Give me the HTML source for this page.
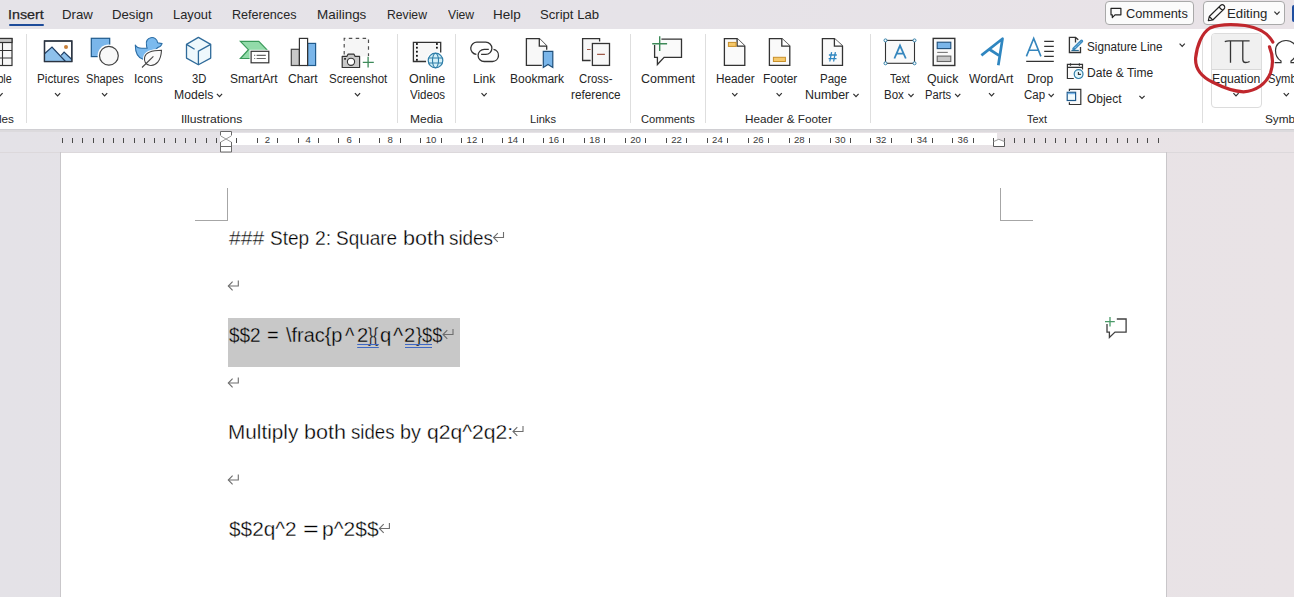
<!DOCTYPE html>
<html><head><meta charset="utf-8"><style>
html,body{margin:0;padding:0;}
body{width:1294px;height:597px;overflow:hidden;position:relative;background:#e6e3e7;font-family:"Liberation Sans",sans-serif;}
.t{position:absolute;white-space:pre;line-height:1;transform-origin:0 0;}
.a{position:absolute;}
svg{position:absolute;overflow:visible;}
</style></head><body>
<div class="a" style="left:0px;top:0px;width:1294px;height:29px;background:linear-gradient(to right,#e5e3e8,#e6e3e8 50%,#e9e3e7);"></div>
<div class="a" style="left:0px;top:29px;width:1294px;height:100px;background:#ffffff;"></div>
<div class="a" style="left:9px;top:24px;width:35px;height:2px;background:#1e4c9a;border-radius:1px;"></div>
<div class="a" style="left:0px;top:129px;width:1294px;height:24px;background:linear-gradient(to right,#e4e2e7,#e6e2e6 50%,#e9e3e6);"></div>
<div class="a" style="left:0px;top:129px;width:1294px;height:1px;background:#d0cfd3;"></div>
<div class="a" style="left:0px;top:130px;width:1294px;height:2px;background:#dcdadd;"></div>
<div class="a" style="left:220px;top:133px;width:777px;height:12px;background:#ffffff;"></div>
<div class="a" style="left:0px;top:152px;width:1294px;height:445px;background:linear-gradient(to right,#e4e2e7,#e6e2e6 50%,#e9e3e6);"></div>
<div class="a" style="left:0px;top:152px;width:1294px;height:1px;background:#dcd8db;"></div>
<div class="a" style="left:60px;top:152px;width:1px;height:445px;background:#c9c7ca;"></div>
<div class="a" style="left:61px;top:153px;width:1105px;height:444px;background:#ffffff;"></div>
<div class="a" style="left:1166px;top:152px;width:1px;height:445px;background:#c9c7ca;"></div>
<div class="a" style="left:26px;top:34px;width:1px;height:89px;background:#dedede;"></div>
<div class="a" style="left:397px;top:34px;width:1px;height:89px;background:#dedede;"></div>
<div class="a" style="left:455px;top:34px;width:1px;height:89px;background:#dedede;"></div>
<div class="a" style="left:630px;top:34px;width:1px;height:89px;background:#dedede;"></div>
<div class="a" style="left:705px;top:34px;width:1px;height:89px;background:#dedede;"></div>
<div class="a" style="left:870px;top:34px;width:1px;height:89px;background:#dedede;"></div>
<div class="a" style="left:1202px;top:34px;width:1px;height:89px;background:#dedede;"></div>
<div class="a" style="left:1105px;top:1px;width:89px;height:24px;background:#fbfbfb;border:1px solid #a9a9a9;border-radius:4px;box-sizing:border-box;"></div>
<div class="a" style="left:1203px;top:1px;width:82px;height:24px;background:#fbfbfb;border:1px solid #a9a9a9;border-radius:4px;box-sizing:border-box;"></div>
<div class="a" style="left:1292px;top:4.5px;width:2px;height:17.5px;background:#1f4fa0;border-radius:2px 0 0 2px;"></div>
<div class="a" style="left:1211px;top:33px;width:51px;height:75px;background:#ffffff;border:1px solid #dcdcdc;border-radius:4px;box-sizing:border-box;"></div>
<div class="a" style="left:1212px;top:34px;width:49px;height:35px;background:#f0f0f0;border-radius:3px 3px 0 0;"></div>
<div class="a" style="left:1212px;top:69px;width:49px;height:1px;background:#d8d8d8;"></div>
<div class="a" style="left:227px;top:188px;width:1px;height:33px;background:#a6a6a6;"></div>
<div class="a" style="left:195px;top:220px;width:33px;height:1px;background:#a6a6a6;"></div>
<div class="a" style="left:1000px;top:188px;width:1px;height:33px;background:#a6a6a6;"></div>
<div class="a" style="left:1000px;top:220px;width:33px;height:1px;background:#a6a6a6;"></div>
<div class="a" style="left:228px;top:318px;width:232px;height:49px;background:#c8c8c8;"></div>
<div class="t" style="left:8.11px;top:8.15px;font-size:13px;color:#262626;transform:scaleX(1.1020);-webkit-text-stroke:0.25px #262626;">Insert</div>
<div class="t" style="left:62.24px;top:8.15px;font-size:13px;color:#262626;transform:scaleX(1.0159);">Draw</div>
<div class="t" style="left:112.45px;top:8.15px;font-size:13px;color:#262626;transform:scaleX(1.0121);">Design</div>
<div class="t" style="left:173.17px;top:8.15px;font-size:13px;color:#262626;transform:scaleX(0.9880);">Layout</div>
<div class="t" style="left:232.39px;top:8.15px;font-size:13px;color:#262626;transform:scaleX(0.9695);">References</div>
<div class="t" style="left:316.52px;top:8.15px;font-size:13px;color:#262626;transform:scaleX(1.0349);">Mailings</div>
<div class="t" style="left:386.63px;top:8.15px;font-size:13px;color:#262626;transform:scaleX(0.9370);">Review</div>
<div class="t" style="left:447.60px;top:8.15px;font-size:13px;color:#262626;transform:scaleX(0.9364);">View</div>
<div class="t" style="left:493.12px;top:8.15px;font-size:13px;color:#262626;transform:scaleX(1.0373);">Help</div>
<div class="t" style="left:540.11px;top:8.15px;font-size:13px;color:#262626;transform:scaleX(1.0085);">Script Lab</div>
<div class="t" style="left:1126.16px;top:6.75px;font-size:13px;color:#262626;transform:scaleX(0.9831);">Comments</div>
<div class="t" style="left:1227.44px;top:6.75px;font-size:13px;color:#262626;transform:scaleX(1.0155);">Editing</div>
<div class="t" style="left:-14.22px;top:73.10px;font-size:12px;color:#262626;transform:scaleX(0.8979);">Table</div>
<div class="t" style="left:36.66px;top:73.10px;font-size:12px;color:#262626;transform:scaleX(0.9769);">Pictures</div>
<div class="t" style="left:85.70px;top:73.10px;font-size:12px;color:#262626;transform:scaleX(0.9260);">Shapes</div>
<div class="t" style="left:134.22px;top:73.10px;font-size:12px;color:#262626;transform:scaleX(1.0044);">Icons</div>
<div class="t" style="left:191.81px;top:73.10px;font-size:12px;color:#262626;transform:scaleX(0.9335);">3D</div>
<div class="t" style="left:173.82px;top:89.10px;font-size:12px;color:#262626;transform:scaleX(1.0160);">Models</div>
<div class="t" style="left:230.46px;top:73.10px;font-size:12px;color:#262626;transform:scaleX(1.0050);">SmartArt</div>
<div class="t" style="left:288.39px;top:73.10px;font-size:12px;color:#262626;transform:scaleX(1.0101);">Chart</div>
<div class="t" style="left:328.78px;top:73.10px;font-size:12px;color:#262626;transform:scaleX(0.9596);">Screenshot</div>
<div class="t" style="left:408.94px;top:73.10px;font-size:12px;color:#262626;transform:scaleX(1.0400);">Online</div>
<div class="t" style="left:409.50px;top:89.10px;font-size:12px;color:#262626;transform:scaleX(0.9624);">Videos</div>
<div class="t" style="left:473.43px;top:73.10px;font-size:12px;color:#262626;transform:scaleX(1.0088);">Link</div>
<div class="t" style="left:509.84px;top:73.10px;font-size:12px;color:#262626;transform:scaleX(1.0016);">Bookmark</div>
<div class="t" style="left:579.03px;top:73.10px;font-size:12px;color:#262626;transform:scaleX(0.9469);">Cross-</div>
<div class="t" style="left:570.84px;top:89.10px;font-size:12px;color:#262626;transform:scaleX(0.9793);">reference</div>
<div class="t" style="left:640.98px;top:73.10px;font-size:12px;color:#262626;transform:scaleX(1.0393);">Comment</div>
<div class="t" style="left:715.56px;top:73.10px;font-size:12px;color:#262626;transform:scaleX(0.9806);">Header</div>
<div class="t" style="left:762.85px;top:73.10px;font-size:12px;color:#262626;transform:scaleX(0.9891);">Footer</div>
<div class="t" style="left:819.68px;top:73.10px;font-size:12px;color:#262626;transform:scaleX(0.9559);">Page</div>
<div class="t" style="left:804.60px;top:89.10px;font-size:12px;color:#262626;transform:scaleX(1.0370);">Number</div>
<div class="t" style="left:889.78px;top:73.10px;font-size:12px;color:#262626;transform:scaleX(0.9018);">Text</div>
<div class="t" style="left:883.58px;top:89.10px;font-size:12px;color:#262626;transform:scaleX(0.9593);">Box</div>
<div class="t" style="left:927.45px;top:73.10px;font-size:12px;color:#262626;transform:scaleX(1.0201);">Quick</div>
<div class="t" style="left:924.61px;top:89.10px;font-size:12px;color:#262626;transform:scaleX(0.9314);">Parts</div>
<div class="t" style="left:969.40px;top:73.10px;font-size:12px;color:#262626;transform:scaleX(1.0148);">WordArt</div>
<div class="t" style="left:1026.73px;top:73.10px;font-size:12px;color:#262626;transform:scaleX(1.0059);">Drop</div>
<div class="t" style="left:1024.23px;top:89.10px;font-size:12px;color:#262626;transform:scaleX(0.9560);">Cap</div>
<div class="t" style="left:1086.97px;top:40.80px;font-size:12px;color:#262626;transform:scaleX(0.9757);">Signature Line</div>
<div class="t" style="left:1087.04px;top:66.60px;font-size:12px;color:#262626;transform:scaleX(1.0033);">Date &amp; Time</div>
<div class="t" style="left:1087.46px;top:92.60px;font-size:12px;color:#262626;transform:scaleX(0.9968);">Object</div>
<div class="t" style="left:1212.02px;top:73.10px;font-size:12px;color:#262626;transform:scaleX(1.0202);">Equation</div>
<div class="t" style="left:1267.90px;top:73.10px;font-size:12px;color:#262626;transform:scaleX(0.9347);">Symbol</div>
<div class="t" style="left:-20.23px;top:113.65px;font-size:11px;color:#262626;transform:scaleX(1.0676);">Tables</div>
<div class="t" style="left:181.31px;top:113.65px;font-size:11px;color:#262626;transform:scaleX(1.1040);">Illustrations</div>
<div class="t" style="left:410.04px;top:113.65px;font-size:11px;color:#262626;transform:scaleX(1.0919);">Media</div>
<div class="t" style="left:529.91px;top:113.65px;font-size:11px;color:#262626;transform:scaleX(1.0117);">Links</div>
<div class="t" style="left:641.04px;top:113.65px;font-size:11px;color:#262626;transform:scaleX(1.0145);">Comments</div>
<div class="t" style="left:744.56px;top:113.65px;font-size:11px;color:#262626;transform:scaleX(1.0673);">Header &amp; Footer</div>
<div class="t" style="left:1026.78px;top:113.65px;font-size:11px;color:#262626;transform:scaleX(0.9888);">Text</div>
<div class="t" style="left:1265.17px;top:113.65px;font-size:11px;color:#262626;transform:scaleX(1.0727);">Symbols</div>
<div class="t" style="left:228.80px;top:229.43px;font-size:19.5px;color:#000000;transform:scaleX(1.0827);-webkit-text-stroke:0.3px #ffffff;">###</div>
<div class="t" style="left:270.14px;top:229.43px;font-size:19.5px;color:#000000;transform:scaleX(0.9757);-webkit-text-stroke:0.3px #ffffff;">Step</div>
<div class="t" style="left:314.93px;top:229.43px;font-size:19.5px;color:#000000;transform:scaleX(0.9945);-webkit-text-stroke:0.3px #ffffff;">2:</div>
<div class="t" style="left:335.55px;top:229.43px;font-size:19.5px;color:#000000;transform:scaleX(0.9722);-webkit-text-stroke:0.3px #ffffff;">Square</div>
<div class="t" style="left:402.50px;top:229.43px;font-size:19.5px;color:#000000;transform:scaleX(1.1070);-webkit-text-stroke:0.3px #ffffff;">both</div>
<div class="t" style="left:449.33px;top:229.43px;font-size:19.5px;color:#000000;transform:scaleX(0.9673);-webkit-text-stroke:0.3px #ffffff;">sides</div>
<div class="t" style="left:228.51px;top:326.43px;font-size:19.5px;color:#000000;transform:scaleX(0.9733);-webkit-text-stroke:0.3px #c8c8c8;">$$2</div>
<div class="t" style="left:267.20px;top:326.43px;font-size:19.5px;color:#000000;transform:scaleX(1.0256);-webkit-text-stroke:0.3px #c8c8c8;">=</div>
<div class="t" style="left:285.80px;top:326.43px;font-size:19.5px;color:#000000;transform:scaleX(1.0206);-webkit-text-stroke:0.3px #c8c8c8;">\frac{p</div>
<div class="t" style="left:356.59px;top:326.43px;font-size:19.5px;color:#000000;transform:scaleX(1.0368);-webkit-text-stroke:0.3px #c8c8c8;">2</div>
<div class="t" style="left:367.57px;top:326.43px;font-size:19.5px;color:#000000;transform:scaleX(0.7865);-webkit-text-stroke:0.3px #c8c8c8;">}{</div>
<div class="t" style="left:379.99px;top:326.43px;font-size:19.5px;color:#000000;transform:scaleX(1.0369);-webkit-text-stroke:0.3px #c8c8c8;">q</div>
<div class="t" style="left:404.39px;top:326.43px;font-size:19.5px;color:#000000;transform:scaleX(1.0368);-webkit-text-stroke:0.3px #c8c8c8;">2</div>
<div class="t" style="left:415.73px;top:326.43px;font-size:19.5px;color:#000000;transform:scaleX(0.9389);-webkit-text-stroke:0.3px #c8c8c8;">}$$</div>
<div class="t" style="left:345.10px;top:324.29px;font-size:19.5px;color:#000000;transform:scale(1.0256,1.2536);-webkit-text-stroke:0.3px #c8c8c8;">^</div>
<div class="t" style="left:392.90px;top:324.29px;font-size:19.5px;color:#000000;transform:scale(1.1139,1.2536);-webkit-text-stroke:0.3px #c8c8c8;">^</div>
<div class="t" style="left:227.74px;top:423.43px;font-size:19.5px;color:#000000;transform:scaleX(1.0629);-webkit-text-stroke:0.3px #ffffff;">Multiply</div>
<div class="t" style="left:303.70px;top:423.43px;font-size:19.5px;color:#000000;transform:scaleX(1.1070);-webkit-text-stroke:0.3px #ffffff;">both</div>
<div class="t" style="left:350.63px;top:423.43px;font-size:19.5px;color:#000000;transform:scaleX(0.9560);-webkit-text-stroke:0.3px #ffffff;">sides</div>
<div class="t" style="left:399.91px;top:423.43px;font-size:19.5px;color:#000000;transform:scaleX(1.0142);-webkit-text-stroke:0.3px #ffffff;">by</div>
<div class="t" style="left:426.86px;top:423.43px;font-size:19.5px;color:#000000;transform:scaleX(1.0824);-webkit-text-stroke:0.3px #ffffff;">q2q^2q2:</div>
<div class="t" style="left:228.69px;top:520.42px;font-size:19.5px;color:#000000;transform:scaleX(1.0662);-webkit-text-stroke:0.3px #ffffff;">$$2q^2</div>
<div class="t" style="left:302.59px;top:520.42px;font-size:19.5px;color:#000000;transform:scaleX(1.3815);-webkit-text-stroke:0.3px #ffffff;">=</div>
<div class="t" style="left:321.64px;top:520.42px;font-size:19.5px;color:#000000;transform:scaleX(1.0774);-webkit-text-stroke:0.3px #ffffff;">p^2$$</div>
<svg width="1294" height="597" style="left:0;top:0;position:absolute" viewBox="0 0 1294 597"><rect x="-14" y="38.5" width="26" height="27" fill="#f8f8f8" stroke="#333333" stroke-width="1.2"/><rect x="-14" y="38.5" width="26" height="4" fill="#c8c8c8" stroke="#333333" stroke-width="1.2"/><path d="M2.5,42.5 V65.5 M-14,50.5 H12 M-14,58 H12" stroke="#333333" stroke-width="1.1"/><polyline points="-2.6,93.1 0,95.8 2.6,93.1" fill="none" stroke="#303030" stroke-width="1.2"/><rect x="44.5" y="41" width="27.3" height="20.5" fill="#ffffff" stroke="#2a3340" stroke-width="1.3"/><path d="M44.5,53.8 L52,47 L65.5,61.5 H44.5 Z" fill="#8ec1ec" stroke="none"/><path d="M61.1,55.4 L64.1,52.1 L71.8,59.5 V61.5 H65.5 Z" fill="#8ec1ec" stroke="none"/><path d="M44.5,53.8 L52,47 L65.5,61.5 M61.1,55.4 L64.1,52.1 L71.8,59.5" fill="none" stroke="#1f3f66" stroke-width="1.2"/><rect x="44.5" y="41" width="27.3" height="20.5" fill="none" stroke="#2a3340" stroke-width="1.3"/><circle cx="66" cy="46.9" r="2" fill="#c8803a"/><polyline points="55.0,93.1 57.6,95.8 60.2,93.1" fill="none" stroke="#303030" stroke-width="1.2"/><rect x="91.3" y="38.3" width="18.4" height="18.3" fill="#7ab6ea" stroke="#1f5a8c" stroke-width="1.2"/><circle cx="108.9" cy="55.8" r="11.3" fill="#ffffff"/><circle cx="108.9" cy="55.8" r="9.4" fill="#f8f8f8" stroke="#444" stroke-width="1.2"/><polyline points="102.0,93.1 104.6,95.8 107.19999999999999,93.1" fill="none" stroke="#303030" stroke-width="1.2"/><path d="M135.3,45.1 C136.5,47.5 139,48.3 142,48.3 H147.2 C146.7,47.3 146.5,46.3 146.5,45 A5.7,5.7 0 1 1 157.6,42.7 L162.1,43.6 C161.2,45.8 159.5,47.2 157.5,47.6 C156.8,48.8 155.8,49.8 154.5,50.5 L143,59.3 C138.5,58 135.3,54 135.3,45.1 Z" fill="#7bbaee" stroke="#2c6ea6" stroke-width="1.1" stroke-linejoin="round"/><path d="M161.5,50.3 C152,50.3 145.5,53 144.6,57.5 C144,61 145.5,64.5 149.5,65.3 C156,66.3 161,61 161.5,50.3 Z" fill="#ffffff" stroke="#ffffff" stroke-width="3"/><path d="M161.5,50.3 C152,50.3 145.5,53 144.6,57.5 C144,61 145.5,64.5 149.5,65.3 C156,66.3 161,61 161.5,50.3 Z" fill="#fafafa" stroke="#444" stroke-width="1.1"/><path d="M142,67.5 L153.4,56.4" stroke="#444" stroke-width="1.1"/><path d="M198.4,37.4 L210.7,44.4 V58.1 L198.4,64.8 L186.5,58.1 V44.4 Z" fill="#eef8fc" stroke="#2f6b9a" stroke-width="1.3" stroke-linejoin="round"/><path d="M186.5,44.4 L194.6,49.3 M210.7,44.4 L198.4,51.1 V64.8" fill="none" stroke="#2f6b9a" stroke-width="1.3"/><polyline points="216.9,93.89999999999999 219.5,96.6 222.1,93.89999999999999" fill="none" stroke="#303030" stroke-width="1.2"/><path d="M240.4,41.4 H258.8 L266.8,49.7 L252,58.5 H240.4 L248.4,49.7 Z" fill="#92dba9" stroke="#3a9a5a" stroke-width="1.2" stroke-linejoin="miter"/><rect x="249.6" y="49.8" width="20.7" height="14.5" fill="#ffffff"/><rect x="251.1" y="51.3" width="17.7" height="11.5" fill="#ffffff" stroke="#333333" stroke-width="1.2"/><path d="M254.2,55.4 h1 M256.6,55.4 H265.8 M254.2,58.5 h1 M256.6,58.5 H265.8" stroke="#666" stroke-width="1.1"/><rect x="291.3" y="49.3" width="8.1" height="16.2" fill="#c8c8c8" stroke="#444" stroke-width="1.2"/><rect x="307.6" y="43.4" width="8" height="22.1" fill="#7ab6ea" stroke="#1f5a8c" stroke-width="1.2"/><rect x="299.4" y="38.4" width="8.2" height="27.1" fill="#ffffff" stroke="#333" stroke-width="1.2"/><rect x="344.2" y="38.4" width="24.3" height="18" fill="#f6f6f6" stroke="none"/><path d="M344.2,54.5 V38.4 H368.5 V56" fill="none" stroke="#505050" stroke-width="1.2" stroke-dasharray="3.5,3.4"/><path d="M342.2,56.3 H347 L348,54.2 H354 L355,56.3 H359.6 V67.5 H342.2 Z" fill="#c8c8c8" stroke="#333" stroke-width="1.2" stroke-linejoin="round"/><circle cx="351" cy="61.8" r="3.6" fill="#ffffff" stroke="#333" stroke-width="1.1"/><rect x="344.2" y="58" width="1.7" height="1.7" fill="#222"/><path d="M362.8,62.3 H373.8 M368.1,56.8 V67.5" stroke="#3d8a5a" stroke-width="1.3"/><polyline points="354.9,93.1 357.5,95.8 360.1,93.1" fill="none" stroke="#303030" stroke-width="1.2"/><path d="M426.1,61.5 H413.4 V42.4 H440.7 V52.4" fill="#f7f7f7" stroke="#333333" stroke-width="1.3"/><rect x="416" y="43.1" width="1.8" height="1.8" fill="#111"/><rect x="416" y="46.800000000000004" width="1.8" height="1.8" fill="#111"/><rect x="416" y="50.800000000000004" width="1.8" height="1.8" fill="#111"/><rect x="416" y="54.9" width="1.8" height="1.8" fill="#111"/><rect x="416" y="58.9" width="1.8" height="1.8" fill="#111"/><rect x="436" y="43.1" width="1.8" height="1.8" fill="#111"/><rect x="436" y="46.800000000000004" width="1.8" height="1.8" fill="#111"/><circle cx="435.5" cy="60.5" r="9" fill="#ffffff"/><circle cx="435.5" cy="60.5" r="7.3" fill="#d4f0f8" stroke="#2f7ea8" stroke-width="1.2"/><ellipse cx="435.5" cy="60.5" rx="3" ry="7.3" fill="none" stroke="#2f7ea8" stroke-width="1.1"/><path d="M428.8,58 H442.2 M428.8,63 H442.2" stroke="#2f7ea8" stroke-width="1.1"/><path d="M476.4,54.4 A6.1,6.1 0 0 1 477.3,42.2 H485.8 A6.1,6.1 0 0 1 485.8,54.4 H481.1" fill="none" stroke="#333" stroke-width="1.3"/><path d="M488.8,49.3 H484.2 A6.1,6.1 0 0 0 484.2,61.5 H492.5 A6.1,6.1 0 0 0 493.5,49.4" fill="none" stroke="#333" stroke-width="1.3"/><polyline points="481.5,93.1 484.1,95.8 486.70000000000005,93.1" fill="none" stroke="#303030" stroke-width="1.2"/><path d="M541.8,65.4 H526.4 V38.6 H539.3 L546.7,46.1 V49.7" fill="#f8f8f8" stroke="#333333" stroke-width="1.3"/><path d="M539.3,38.6 V46.1 H546.7" fill="#ffffff" stroke="#333333" stroke-width="1.3"/><path d="M543.3,51.4 H552.8 V67.5 L548,64.5 L543.3,67.5 Z" fill="#7ab6ea" stroke="#1f4f7a" stroke-width="1.2" stroke-linejoin="miter"/><path d="M590.6,60.5 H582.6 V38.6 H599.6 V41.4" fill="#f8f8f8" stroke="#333333" stroke-width="1.3"/><rect x="592.4" y="43.5" width="17.1" height="21.9" fill="#f8f8f8" stroke="#333333" stroke-width="1.3"/><path d="M587,49.5 H590.6 M597.1,54.4 H604.9" stroke="#a05a48" stroke-width="1.2"/><path d="M661.4,39.2 H681.5 V57.3 H664.1 L657.4,64.5 V57.3 H654.6 V45.1" fill="#fafafa" stroke="#333333" stroke-width="1.3"/><path d="M652.2,43.7 H667.1 M659.7,36.2 V51.1" stroke="#3d8a58" stroke-width="1.4"/><path d="M724.4,38.6 H737.1 L744.8,46.1 V65.4 H724.4 Z" fill="#fafafa" stroke="#333333" stroke-width="1.3" stroke-linejoin="miter"/><path d="M737.1,38.6 V46.1 H744.8" fill="#ffffff" stroke="#333333" stroke-width="1.3"/><rect x="728.4" y="42.4" width="7.7" height="4" fill="#f5c86a" stroke="#c8902a" stroke-width="1"/><polyline points="732.1999999999999,93.1 734.8,95.8 737.4,93.1" fill="none" stroke="#303030" stroke-width="1.2"/><path d="M769.4,38.6 H781.8 L789.8,46.1 V65.4 H769.4 Z" fill="#fafafa" stroke="#333333" stroke-width="1.3" stroke-linejoin="miter"/><path d="M781.8,38.6 V46.1 H789.8" fill="#ffffff" stroke="#333333" stroke-width="1.3"/><rect x="773.4" y="57.3" width="12" height="4.2" fill="#f5c86a" stroke="#c8902a" stroke-width="1"/><polyline points="776.6,93.1 779.2,95.8 781.8000000000001,93.1" fill="none" stroke="#303030" stroke-width="1.2"/><path d="M822.4,38.6 H834.4 L842.5,46.1 V65.4 H822.4 Z" fill="#fafafa" stroke="#333333" stroke-width="1.3" stroke-linejoin="miter"/><path d="M834.4,38.6 V46.1 H842.5" fill="#ffffff" stroke="#333333" stroke-width="1.3"/><path d="M831.6,52.1 L829.8,61.5 M835.4,52.1 L833.6,61.5 M828.9,55 H836.8 M828.6,58.6 H836.5" stroke="#2f86c0" stroke-width="1.3"/><polyline points="853.4,93.89999999999999 856,96.6 858.6,93.89999999999999" fill="none" stroke="#303030" stroke-width="1.2"/><rect x="885.5" y="40.4" width="29" height="22.9" fill="#fafafa" stroke="#333333" stroke-width="1.1"/><circle cx="885.5" cy="40.4" r="1.5" fill="#ffffff" stroke="#2f7ea8" stroke-width="1"/><circle cx="914.5" cy="40.4" r="1.5" fill="#ffffff" stroke="#2f7ea8" stroke-width="1"/><circle cx="885.5" cy="63.3" r="1.5" fill="#ffffff" stroke="#2f7ea8" stroke-width="1"/><circle cx="914.5" cy="63.3" r="1.5" fill="#ffffff" stroke="#2f7ea8" stroke-width="1"/><path d="M894.4,58.5 L900,45.6 L905.8,58.5 M896.6,53.6 H903.6" fill="none" stroke="#3586bd" stroke-width="1.8"/><polyline points="908.4,93.89999999999999 911,96.6 913.6,93.89999999999999" fill="none" stroke="#303030" stroke-width="1.2"/><rect x="933.2" y="38.4" width="21.6" height="27.1" fill="#fafafa" stroke="#333333" stroke-width="1.4"/><rect x="937.2" y="42.2" width="13.6" height="6.4" fill="#7ab6ea" stroke="#1f4f7a" stroke-width="1.1"/><path d="M937.2,52.4 H947.8" stroke="#777" stroke-width="1.1"/><rect x="937.2" y="56.1" width="13.6" height="5.4" fill="#c8c8c8" stroke="#666" stroke-width="1.1"/><polyline points="955.1,93.89999999999999 957.7,96.6 960.3000000000001,93.89999999999999" fill="none" stroke="#303030" stroke-width="1.2"/><path d="M981.4,55.4 L1002.5,38.7 L998.3,65.2 M989.7,49.5 L998.8,55.4" fill="none" stroke="#2f86c0" stroke-width="2.7" stroke-linejoin="round"/><polyline points="989.0,93.1 991.6,95.8 994.2,93.1" fill="none" stroke="#303030" stroke-width="1.2"/><path d="M1026.4,56.4 L1033.7,38.4 L1040.9,56.4 M1028.8,50.2 H1038.6" fill="none" stroke="#3586bd" stroke-width="1.6"/><path d="M1044.2,41.4 H1053.8 M1044.2,46.4 H1053.8 M1044.2,51.4 H1053.8 M1044.2,56.4 H1053.8 M1026.2,61.3 H1053.8" stroke="#333" stroke-width="1.3"/><polyline points="1048.6000000000001,93.89999999999999 1051.2,96.6 1053.8,93.89999999999999" fill="none" stroke="#303030" stroke-width="1.2"/><path d="M1080.5,47 V52.5 H1069.4 V37.4 H1075.5 L1078.3,39.8" fill="#fafafa" stroke="#333333" stroke-width="1.3"/><path d="M1075.5,37.4 V42.5" stroke="#333333" stroke-width="1.3"/><path d="M1073.8,48.9 L1081.6,41.1" stroke="#3a8ac0" stroke-width="3.2" stroke-linecap="round"/><path d="M1074.8,47.9 L1081,41.7" stroke="#dff2fb" stroke-width="0.9" stroke-dasharray="1,1"/><path d="M1071.4,50.5 H1078.8" stroke="#2a6a90" stroke-width="1.2"/><polyline points="1179.6000000000001,43.6 1182.2,46.3 1184.8,43.6" fill="none" stroke="#303030" stroke-width="1.2"/><path d="M1073.8,78.5 H1067.4 V64.3 H1082.5 V69.5 M1067.4,67.4 H1082.5 M1070.5,63.2 V65.8 M1079.4,63.2 V65.8" fill="#fafafa" stroke="#333333" stroke-width="1.2"/><circle cx="1078.6" cy="74.1" r="5.8" fill="#ffffff"/><circle cx="1078.6" cy="74.1" r="4.4" fill="#e4f6fb" stroke="#2f7ea8" stroke-width="1.2"/><path d="M1078.4,72.1 V74.4 H1080.9" fill="none" stroke="#333" stroke-width="1.1"/><path d="M1069.4,91 V89.4 H1080.8 V104.5 H1069.4 V102.3" fill="#fafafa" stroke="#333333" stroke-width="1.2"/><rect x="1067.2" y="92.3" width="8.4" height="8.2" fill="#f2fbfd" stroke="#1f5a8c" stroke-width="1.2"/><rect x="1067.8" y="92.9" width="7.2" height="1.3" fill="#7ab6ea"/><polyline points="1139.4,95.8 1142,98.5 1144.6,95.8" fill="none" stroke="#303030" stroke-width="1.2"/><path d="M1224.8,41.6 C1226,41 1227,40.8 1229,40.8 H1249.6 M1230.5,40.8 V62.7 M1242.8,40.8 V59.5 C1242.8,61.8 1244,62.5 1245.5,62.5 C1247,62.5 1248.5,62.2 1249.6,61.5" fill="none" stroke="#333" stroke-width="1.3"/><polyline points="1233.4,93.19999999999999 1236,95.89999999999999 1238.6,93.19999999999999" fill="none" stroke="#303030" stroke-width="1.2"/><path d="M1274.6,62.7 H1281 V61 C1277,58.5 1275.5,54.5 1275.5,50.5 C1275.5,44.5 1280,40.5 1286,40.5 C1292,40.5 1296.5,44.5 1296.5,50.5 C1296.5,54.5 1295,58.5 1291,61 V62.7 H1297.4" fill="none" stroke="#333" stroke-width="1.2"/><polyline points="1283.7,93.1 1286.3,95.8 1288.8999999999999,93.1" fill="none" stroke="#303030" stroke-width="1.2"/><path d="M1111,8.3 H1120.9 V14.8 H1115 L1112.3,17.6 V14.8 H1111 Z" fill="none" stroke="#222" stroke-width="1.2" stroke-linejoin="round"/><path d="M1208.3,20.6 L1209.3,16.5 L1220.5,5.5 C1221.5,4.5 1223,4.5 1224,5.5 C1225,6.5 1225,8 1224,9 L1212.8,20 Z M1209.3,16.5 L1212.8,20 M1219,7 L1222.5,10.5" fill="none" stroke="#222" stroke-width="1.1" stroke-linejoin="round"/><polyline points="1274.4,11.6 1277,14.3 1279.6,11.6" fill="none" stroke="#303030" stroke-width="1.2"/><path d="M1272.8,42.1 C1268,33 1258,27.5 1245,25.5 C1232,24 1218,24.5 1210,28 C1202,33 1197,45 1195.6,58 C1195,68 1200,76 1212.8,82.3 C1222,87 1233,91.5 1243.5,91.8 C1256,91 1266,84 1270.5,73 C1273.5,64 1272.5,54 1269.5,46.8" fill="none" stroke="#c0272d" stroke-width="3.2" stroke-linecap="round"/><path d="M1116.8,319 H1126.1 V332.1 H1115 L1109.4,337.5 V332.1 H1107 V324" fill="none" stroke="#404040" stroke-width="1.3"/><path d="M1105,321.7 H1114.8 M1110,317 V326.4" stroke="#4a9a68" stroke-width="1.3"/><path d="M503.5,232 V237.5 H493.5" fill="none" stroke="#6e6e6e" stroke-width="1.1"/><path d="M497.8,233.2 L493.5,237.5 L497.8,241.8" fill="none" stroke="#6e6e6e" stroke-width="1.1"/><path d="M238.3,280.5 V286.0 H228.3" fill="none" stroke="#6e6e6e" stroke-width="1.1"/><path d="M232.60000000000002,281.7 L228.3,286.0 L232.60000000000002,290.3" fill="none" stroke="#6e6e6e" stroke-width="1.1"/><path d="M453,329 V334.5 H443" fill="none" stroke="#6e6e6e" stroke-width="1.1"/><path d="M447.3,330.2 L443,334.5 L447.3,338.8" fill="none" stroke="#6e6e6e" stroke-width="1.1"/><path d="M238.3,377.5 V383.0 H228.3" fill="none" stroke="#6e6e6e" stroke-width="1.1"/><path d="M232.60000000000002,378.7 L228.3,383.0 L232.60000000000002,387.3" fill="none" stroke="#6e6e6e" stroke-width="1.1"/><path d="M523,426 V431.5 H513" fill="none" stroke="#6e6e6e" stroke-width="1.1"/><path d="M517.3,427.2 L513,431.5 L517.3,435.8" fill="none" stroke="#6e6e6e" stroke-width="1.1"/><path d="M238.3,474.5 V480.0 H228.3" fill="none" stroke="#6e6e6e" stroke-width="1.1"/><path d="M232.60000000000002,475.7 L228.3,480.0 L232.60000000000002,484.3" fill="none" stroke="#6e6e6e" stroke-width="1.1"/><path d="M389.4,523 V528.5 H379.4" fill="none" stroke="#6e6e6e" stroke-width="1.1"/><path d="M383.7,524.2 L379.4,528.5 L383.7,532.8" fill="none" stroke="#6e6e6e" stroke-width="1.1"/><path d="M357.2,344.5 H378.8 M357.2,347.5 H378.8" stroke="#3f68c4" stroke-width="1.1"/><path d="M405,344.5 H432 M405,347.5 H432" stroke="#3f68c4" stroke-width="1.1"/></svg><svg width="1294" height="597" style="left:0;top:0;position:absolute" viewBox="0 0 1294 597"><rect x="62" y="138" width="1" height="5" fill="#4a4a4a"/><rect x="72" y="138" width="1" height="5" fill="#4a4a4a"/><rect x="82" y="138" width="1" height="5" fill="#4a4a4a"/><rect x="93" y="138" width="1" height="5" fill="#4a4a4a"/><rect x="103" y="138" width="1" height="5" fill="#4a4a4a"/><rect x="113" y="138" width="1" height="5" fill="#4a4a4a"/><rect x="123" y="138" width="1" height="5" fill="#4a4a4a"/><rect x="134" y="138" width="1" height="5" fill="#4a4a4a"/><rect x="144" y="138" width="1" height="5" fill="#4a4a4a"/><rect x="154" y="138" width="1" height="5" fill="#4a4a4a"/><rect x="164" y="138" width="1" height="5" fill="#4a4a4a"/><rect x="175" y="138" width="1" height="5" fill="#4a4a4a"/><rect x="185" y="138" width="1" height="5" fill="#4a4a4a"/><rect x="195" y="138" width="1" height="5" fill="#4a4a4a"/><rect x="206" y="138" width="1" height="5" fill="#4a4a4a"/><rect x="216" y="138" width="1" height="5" fill="#4a4a4a"/><rect x="1014" y="138" width="1" height="5" fill="#4a4a4a"/><rect x="1024" y="138" width="1" height="5" fill="#4a4a4a"/><rect x="1034" y="138" width="1" height="5" fill="#4a4a4a"/><rect x="1045" y="138" width="1" height="5" fill="#4a4a4a"/><rect x="1055" y="138" width="1" height="5" fill="#4a4a4a"/><rect x="1065" y="138" width="1" height="5" fill="#4a4a4a"/><rect x="1076" y="138" width="1" height="5" fill="#4a4a4a"/><rect x="1086" y="138" width="1" height="5" fill="#4a4a4a"/><rect x="1096" y="138" width="1" height="5" fill="#4a4a4a"/><rect x="1106" y="138" width="1" height="5" fill="#4a4a4a"/><rect x="1117" y="138" width="1" height="5" fill="#4a4a4a"/><rect x="1127" y="138" width="1" height="5" fill="#4a4a4a"/><rect x="1137" y="138" width="1" height="5" fill="#4a4a4a"/><rect x="1147" y="138" width="1" height="5" fill="#4a4a4a"/><rect x="1158" y="138" width="1" height="5" fill="#4a4a4a"/><rect x="236" y="138" width="1" height="5" fill="#4a4a4a"/><rect x="257" y="138" width="1" height="5" fill="#4a4a4a"/><rect x="277" y="138" width="1" height="5" fill="#4a4a4a"/><rect x="298" y="138" width="1" height="5" fill="#4a4a4a"/><rect x="318" y="138" width="1" height="5" fill="#4a4a4a"/><rect x="338" y="138" width="1" height="5" fill="#4a4a4a"/><rect x="359" y="138" width="1" height="5" fill="#4a4a4a"/><rect x="379" y="138" width="1" height="5" fill="#4a4a4a"/><rect x="400" y="138" width="1" height="5" fill="#4a4a4a"/><rect x="420" y="138" width="1" height="5" fill="#4a4a4a"/><rect x="441" y="138" width="1" height="5" fill="#4a4a4a"/><rect x="461" y="138" width="1" height="5" fill="#4a4a4a"/><rect x="482" y="138" width="1" height="5" fill="#4a4a4a"/><rect x="502" y="138" width="1" height="5" fill="#4a4a4a"/><rect x="523" y="138" width="1" height="5" fill="#4a4a4a"/><rect x="543" y="138" width="1" height="5" fill="#4a4a4a"/><rect x="563" y="138" width="1" height="5" fill="#4a4a4a"/><rect x="584" y="138" width="1" height="5" fill="#4a4a4a"/><rect x="604" y="138" width="1" height="5" fill="#4a4a4a"/><rect x="625" y="138" width="1" height="5" fill="#4a4a4a"/><rect x="645" y="138" width="1" height="5" fill="#4a4a4a"/><rect x="666" y="138" width="1" height="5" fill="#4a4a4a"/><rect x="686" y="138" width="1" height="5" fill="#4a4a4a"/><rect x="707" y="138" width="1" height="5" fill="#4a4a4a"/><rect x="727" y="138" width="1" height="5" fill="#4a4a4a"/><rect x="748" y="138" width="1" height="5" fill="#4a4a4a"/><rect x="768" y="138" width="1" height="5" fill="#4a4a4a"/><rect x="789" y="138" width="1" height="5" fill="#4a4a4a"/><rect x="809" y="138" width="1" height="5" fill="#4a4a4a"/><rect x="830" y="138" width="1" height="5" fill="#4a4a4a"/><rect x="850" y="138" width="1" height="5" fill="#4a4a4a"/><rect x="870" y="138" width="1" height="5" fill="#4a4a4a"/><rect x="891" y="138" width="1" height="5" fill="#4a4a4a"/><rect x="911" y="138" width="1" height="5" fill="#4a4a4a"/><rect x="932" y="138" width="1" height="5" fill="#4a4a4a"/><rect x="952" y="138" width="1" height="5" fill="#4a4a4a"/><rect x="973" y="138" width="1" height="5" fill="#4a4a4a"/><rect x="220.5" y="131.5" width="11" height="20.5" fill="#ffffff"/><path d="M220.5,135.5 V131.5 H231.5 V135.5" fill="none" stroke="#6a6a6a" stroke-width="1"/><path d="M220.8,136 L231.5,142.2 M231.2,136 L220.5,142.2" fill="none" stroke="#9a9a9a" stroke-width="1"/><path d="M220.5,142 V152 H231.5 V142 M220.5,146.5 H231.5" fill="none" stroke="#6a6a6a" stroke-width="1"/><path d="M993.5,141.6 L998.8,139.3 L1004.5,141.6 V146.5 H993.5 Z" fill="#ffffff"/><path d="M993.5,138 V146.5 H1004.5 V138" fill="none" stroke="#5a5a5a" stroke-width="1"/><path d="M993.5,141.6 L998.8,139.3 L1004.5,141.6" fill="none" stroke="#9a9a9a" stroke-width="1"/></svg><div class="t" style="left:252.32px;top:135px;width:30px;text-align:center;font-size:9.6px;color:#3a3a3a;">2</div><div class="t" style="left:293.24px;top:135px;width:30px;text-align:center;font-size:9.6px;color:#3a3a3a;">4</div><div class="t" style="left:334.16px;top:135px;width:30px;text-align:center;font-size:9.6px;color:#3a3a3a;">6</div><div class="t" style="left:375.08px;top:135px;width:30px;text-align:center;font-size:9.6px;color:#3a3a3a;">8</div><div class="t" style="left:416.00px;top:135px;width:30px;text-align:center;font-size:9.6px;color:#3a3a3a;">10</div><div class="t" style="left:456.92px;top:135px;width:30px;text-align:center;font-size:9.6px;color:#3a3a3a;">12</div><div class="t" style="left:497.84px;top:135px;width:30px;text-align:center;font-size:9.6px;color:#3a3a3a;">14</div><div class="t" style="left:538.76px;top:135px;width:30px;text-align:center;font-size:9.6px;color:#3a3a3a;">16</div><div class="t" style="left:579.68px;top:135px;width:30px;text-align:center;font-size:9.6px;color:#3a3a3a;">18</div><div class="t" style="left:620.60px;top:135px;width:30px;text-align:center;font-size:9.6px;color:#3a3a3a;">20</div><div class="t" style="left:661.52px;top:135px;width:30px;text-align:center;font-size:9.6px;color:#3a3a3a;">22</div><div class="t" style="left:702.44px;top:135px;width:30px;text-align:center;font-size:9.6px;color:#3a3a3a;">24</div><div class="t" style="left:743.36px;top:135px;width:30px;text-align:center;font-size:9.6px;color:#3a3a3a;">26</div><div class="t" style="left:784.28px;top:135px;width:30px;text-align:center;font-size:9.6px;color:#3a3a3a;">28</div><div class="t" style="left:825.20px;top:135px;width:30px;text-align:center;font-size:9.6px;color:#3a3a3a;">30</div><div class="t" style="left:866.12px;top:135px;width:30px;text-align:center;font-size:9.6px;color:#3a3a3a;">32</div><div class="t" style="left:907.04px;top:135px;width:30px;text-align:center;font-size:9.6px;color:#3a3a3a;">34</div><div class="t" style="left:947.96px;top:135px;width:30px;text-align:center;font-size:9.6px;color:#3a3a3a;">36</div>
</body></html>
